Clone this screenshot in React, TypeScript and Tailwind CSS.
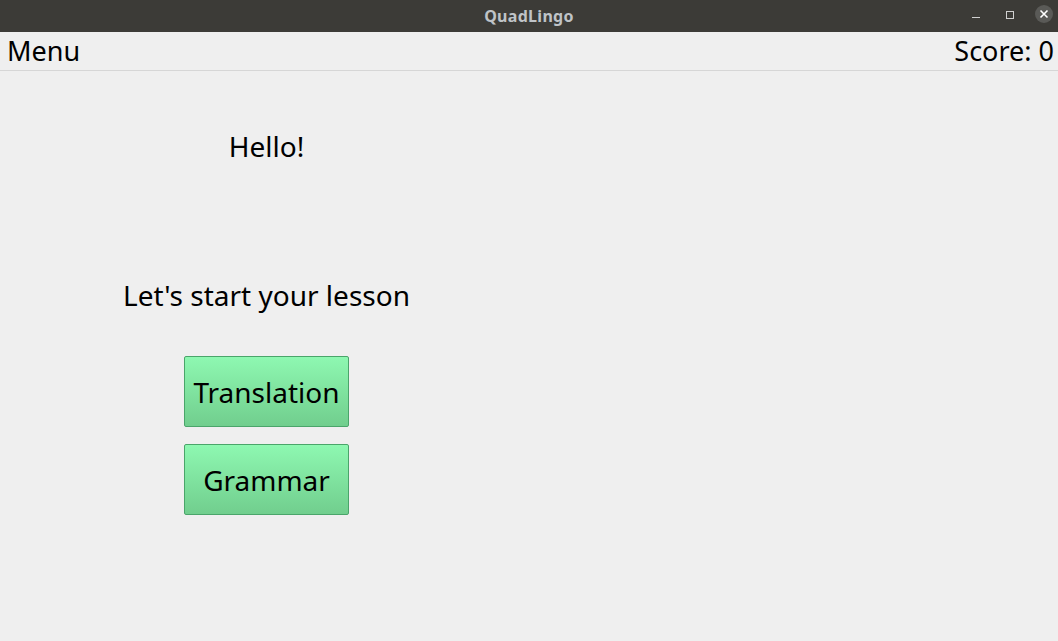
import React from 'react';

const font = { fontFamily: '"Noto Sans", "DejaVu Sans", sans-serif' };

// Window chrome
function TitleBar() {
  return (
    <div className="relative h-[32px] bg-[#3c3b37] flex items-center justify-center">
      <span className="text-[16px] font-bold tracking-[0.3px] text-[#bfc3c7]">QuadLingo</span>
      <div className="absolute right-[5px] top-0 h-[32px] flex items-center">
        <div className="w-[8px] h-[1px] bg-[#d0d0d0] mt-[3px]" />
        <div className="w-[8px] h-[8px] border border-[#d0d0d0] ml-[26px] -mt-[3px]" />
        <div className="w-[18px] h-[18px] rounded-full bg-[#5a5a57] flex items-center justify-center ml-[21px] -mt-[5px]">
          <svg width="10" height="10" viewBox="0 0 10 10" stroke="#ffffff" strokeWidth={1.6}>
            <path d="M1.5 1.5l7 7M8.5 1.5l-7 7" />
          </svg>
        </div>
      </div>
    </div>
  );
}

function LessonButton({ label }: { label: string }) {
  return (
    <button className="w-[165px] h-[71px] rounded-[2px] border border-[#4aa56a] bg-gradient-to-b from-[#8ef8b1] to-[#71ce8e] text-[28px] text-black">
      {label}
    </button>
  );
}

export default function App() {
  return (
    <div className="w-[1058px] h-[641px] bg-[#efefef] flex flex-col overflow-hidden" style={font}>
      <TitleBar />
      <div className="h-[39px] flex items-center justify-between pl-[7px] pr-[4px] border-b border-[#d6d6d6] text-[27px] text-black">
        <span>Menu</span>
        <span>Score: 0</span>
      </div>
      <div className="grid grid-cols-2 flex-1">
        <div className="flex flex-col items-center pt-[57px] pl-[4px] text-[28px] text-black">
          <p className="leading-[36px]">Hello!</p>
          <p className="leading-[36px] mt-[113px]">Let's start your lesson</p>
          <div className="flex flex-col gap-[17px] mt-[43px]">
            <LessonButton label="Translation" />
            <LessonButton label="Grammar" />
          </div>
        </div>
        <div />
      </div>
    </div>
  );
}
